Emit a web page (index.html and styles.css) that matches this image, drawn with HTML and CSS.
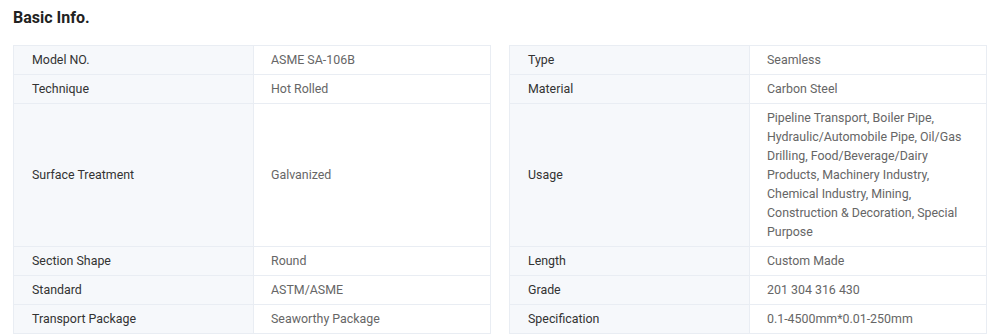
FILE: index.html
```html
<!DOCTYPE html>
<html lang="en">

<head>
    <meta charset="UTF-8" />
    <meta name="viewport" content="width=device-width, initial-scale=1.0" />
    <title>Basic Info.</title>
    <link rel="stylesheet" href="styles.css">
</head>

<body>
    <div class="basic_info">
        <h2 class="title">Basic Info.</h2>
        <div class="info">
            <div class="row">
                <div class="pair"><div class="label">Model NO.</div><div class="value">ASME SA-106B</div></div>
                <div class="pair"><div class="label">Type</div><div class="value">Seamless</div></div>
            </div>
            <div class="row">
                <div class="pair"><div class="label">Technique</div><div class="value">Hot Rolled</div></div>
                <div class="pair"><div class="label">Material</div><div class="value">Carbon Steel</div></div>
            </div>
            <div class="row">
                <div class="pair"><div class="label">Surface Treatment</div><div class="value">Galvanized</div></div>
                <div class="pair"><div class="label">Usage</div><div class="value">Pipeline Transport, Boiler Pipe, Hydraulic/Automobile Pipe, Oil/Gas Drilling, Food/Beverage/Dairy Products, Machinery Industry, Chemical Industry, Mining, Construction &amp; Decoration, Special Purpose</div></div>
            </div>
            <div class="row">
                <div class="pair"><div class="label">Section Shape</div><div class="value">Round</div></div>
                <div class="pair"><div class="label">Length</div><div class="value">Custom Made</div></div>
            </div>
            <div class="row">
                <div class="pair"><div class="label">Standard</div><div class="value">ASTM/ASME</div></div>
                <div class="pair"><div class="label">Grade</div><div class="value">201 304 316 430</div></div>
            </div>
            <div class="row">
                <div class="pair"><div class="label">Transport Package</div><div class="value">Seaworthy Package</div></div>
                <div class="pair"><div class="label">Specification</div><div class="value">0.1-4500mm*0.01-250mm</div></div>
            </div>
        </div>
    </div>
</body>

</html>
```

FILE: styles.css
```css
* {
    box-sizing: border-box;
    font-family: Roboto, 'Liberation Sans', sans-serif;
}

body {
    margin: 0;
    padding: 0 13px;
    background-color: #fff;
    color: #333;
    overflow: hidden;
}

.title {
    margin: 0;
    padding-top: 7px;
    height: 45px;
    font-size: 16px;
    line-height: 22px;
    font-weight: 700;
    color: #222;
}

.info {
    display: flex;
    flex-direction: column;
    font-size: 12.4px;
    line-height: 19px;
}

.row {
    display: flex;
    gap: 18px;
}

.pair {
    width: 478px;
    display: grid;
    grid-template-columns: 240px 1fr;
    border-left: 1px solid #e9edf3;
}

.row:first-child .pair {
    border-top: 1px solid #e9edf3;
}

.label,
.value {
    display: flex;
    align-items: center;
    padding: 4px 17px 5px;
    border-right: 1px solid #e9edf3;
    border-bottom: 1px solid #e9edf3;
}

.label {
    padding-left: 18px;
    background-color: #f6f8fb;
    color: #333;
}

.value {
    color: #666;
}
```
